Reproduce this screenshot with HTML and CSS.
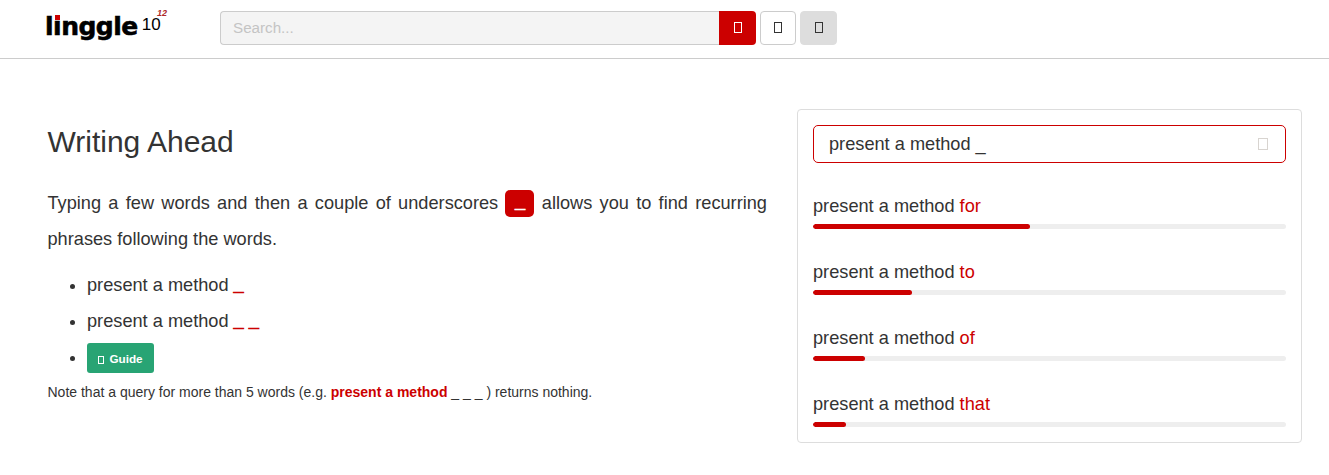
FILE: index.html
```html
<!DOCTYPE html>
<html lang="en">
<head>
    <meta charset="UTF-8">
    <meta name="viewport" content="width=device-width, initial-scale=1.0">
    <title>Linggle 10^12</title>
    <link rel="stylesheet" href="styles.css">
</head>
<body>
    <header class="topbar">
        <a class="logo">
            <span class="logo-word">l<span class="logo-i">ı</span>nggle</span>
            <span class="logo-ten">10</span>
            <span class="logo-exp">12</span>
        </a>
        <div class="search">
            <input class="search-input" type="text" placeholder="Search...">
            <button class="search-btn"><i class="tofu"></i></button>
        </div>
        <button class="tool-btn"><i class="tofu"></i></button>
        <button class="tool-btn tool-btn-grey"><i class="tofu"></i></button>
    </header>

    <main class="content">
        <section class="intro">
            <h1 class="title">Writing Ahead</h1>
            <p class="lead">Typing a few words and then a couple of underscores <span class="chip">_</span> allows you to find recurring phrases following the words.</p>
            <ul class="samples">
                <li>present a method <b class="blank">_</b></li>
                <li>present a method <b class="blank">_ _</b></li>
                <li><button class="guide-btn"><i class="tofu tofu-small"></i>Guide</button></li>
            </ul>
            <p class="note">Note that a query for more than 5 words (e.g. <b class="red">present a method</b> _ _ _ ) returns nothing.</p>
        </section>

        <aside class="card">
            <div class="query">
                <span>present a method _</span>
                <i class="tofu tofu-pale"></i>
            </div>
            <div class="result">
                <div class="phrase">present a method <span class="red">for</span></div>
                <div class="bar"><div class="bar-fill" style="width: 45.9%"></div></div>
            </div>
            <div class="result">
                <div class="phrase">present a method <span class="red">to</span></div>
                <div class="bar"><div class="bar-fill" style="width: 20.9%"></div></div>
            </div>
            <div class="result">
                <div class="phrase">present a method <span class="red">of</span></div>
                <div class="bar"><div class="bar-fill" style="width: 11%"></div></div>
            </div>
            <div class="result">
                <div class="phrase">present a method <span class="red">that</span></div>
                <div class="bar"><div class="bar-fill" style="width: 7%"></div></div>
            </div>
        </aside>
    </main>
</body>
</html>
```

FILE: styles.css
```css
body {
    margin: 0;
    font-family: "Liberation Sans", Arial, sans-serif;
    color: #333;
    background-color: #fff;
}

.red {
    color: #cc0000;
}

/* thick red underscore */
.blank {
    color: #cc0000;
    -webkit-text-stroke: 0.7px #cc0000;
}

/* missing icon font glyph boxes */
.tofu {
    display: inline-block;
    box-sizing: border-box;
    width: 8px;
    height: 11px;
    border: 1px solid currentColor;
}

.tofu-small {
    width: 6px;
    height: 8px;
    margin-right: 5px;
    vertical-align: -1px;
}

.tofu-pale {
    color: #d8d4d0;
    width: 10px;
    height: 12px;
}

/* header */
.topbar {
    display: flex;
    align-items: center;
    height: 56px;
    padding-bottom: 2px;
    border-bottom: 1px solid #ccc;
}

.logo {
    position: relative;
    top: -2px;
    display: flex;
    align-items: baseline;
    width: 175px;
    margin-left: 45px;
    color: #000;
}

.logo-word {
    font-family: "DejaVu Sans", sans-serif;
    font-weight: bold;
    font-size: 25px;
    letter-spacing: -0.5px;
    -webkit-text-stroke: 0.6px #000;
}

.logo-i {
    position: relative;
}

.logo-i::before {
    content: "";
    position: absolute;
    left: 2px;
    top: 3px;
    width: 5px;
    height: 5px;
    background-color: #cc0000;
}

.logo-ten {
    position: relative;
    top: -5px;
    margin-left: 4px;
    font-size: 17px;
}

.logo-exp {
    position: absolute;
    left: 112px;
    top: -4px;
    font-size: 9px;
    font-weight: bold;
    font-style: italic;
    color: #b02a2a;
}

.search {
    display: flex;
    width: 536px;
    height: 34px;
}

.search-input {
    box-sizing: border-box;
    flex: 1;
    height: 34px;
    padding: 0 12px 2px;
    border: 1px solid #ccc;
    border-right: none;
    border-radius: 4px 0 0 4px;
    background-color: #f4f4f4;
    font-family: inherit;
    font-size: 15.2px;
}

.search-input::placeholder {
    color: #c4c4c4;
}

.search-btn {
    width: 37px;
    padding: 0;
    border: none;
    border-radius: 0 4px 4px 0;
    background-color: #cc0000;
    color: #fff;
}

.tool-btn {
    box-sizing: border-box;
    width: 36px;
    height: 34px;
    margin-left: 4px;
    padding: 0;
    border: 1px solid #ccc;
    border-radius: 4px;
    background-color: #fff;
    color: #333;
}

.tool-btn-grey {
    width: 37px;
    border-color: #ddd;
    background-color: #ddd;
}

/* main */
.content {
    display: flex;
    align-items: flex-start;
    padding: 50px 27px 0 47.5px;
}

.intro {
    width: 719.5px;
    margin-right: 30px;
}

.title {
    margin: 15px 0 0;
    font-size: 30px;
    font-weight: normal;
    line-height: 36px;
}

.lead {
    margin: 25px 0 0;
    font-size: 18.2px;
    line-height: 36px;
    text-align: justify;
}

.chip {
    display: inline-block;
    box-sizing: border-box;
    width: 29px;
    height: 27px;
    border-radius: 5px;
    background-color: #cc0000;
    color: #fff;
    -webkit-text-stroke: 0.7px #fff;
    font-weight: bold;
    line-height: 25px;
    text-align: center;
    vertical-align: 1px;
}

.samples {
    margin: 10px 0 0;
    padding-left: 39.5px;
    font-size: 18.2px;
    line-height: 36px;
}

.guide-btn {
    box-sizing: border-box;
    height: 30px;
    width: 67px;
    padding: 0;
    border: none;
    border-radius: 3px;
    background-color: #28a474;
    color: #fff;
    font-family: inherit;
    font-size: 11.7px;
    font-weight: bold;
    vertical-align: middle;
}

.note {
    margin: 7px 0 0;
    font-size: 14px;
    line-height: 20px;
}

/* right card */
.card {
    box-sizing: border-box;
    width: 505px;
    height: 334px;
    padding: 15px;
    border: 1px solid #ddd;
    border-radius: 4px;
}

.query {
    box-sizing: border-box;
    display: flex;
    align-items: center;
    justify-content: space-between;
    height: 38px;
    padding: 0 17px 0 15px;
    border: 1px solid #cc0000;
    border-radius: 5px;
    font-size: 18.2px;
}

.result {
    margin-top: 33px;
}

.phrase {
    font-size: 18.2px;
    line-height: 20px;
}

.bar {
    height: 5px;
    margin-top: 8px;
    border-radius: 3px;
    background-color: #eee;
    overflow: hidden;
}

.bar-fill {
    height: 100%;
    border-radius: 3px;
    background-color: #cc0000;
}
```
